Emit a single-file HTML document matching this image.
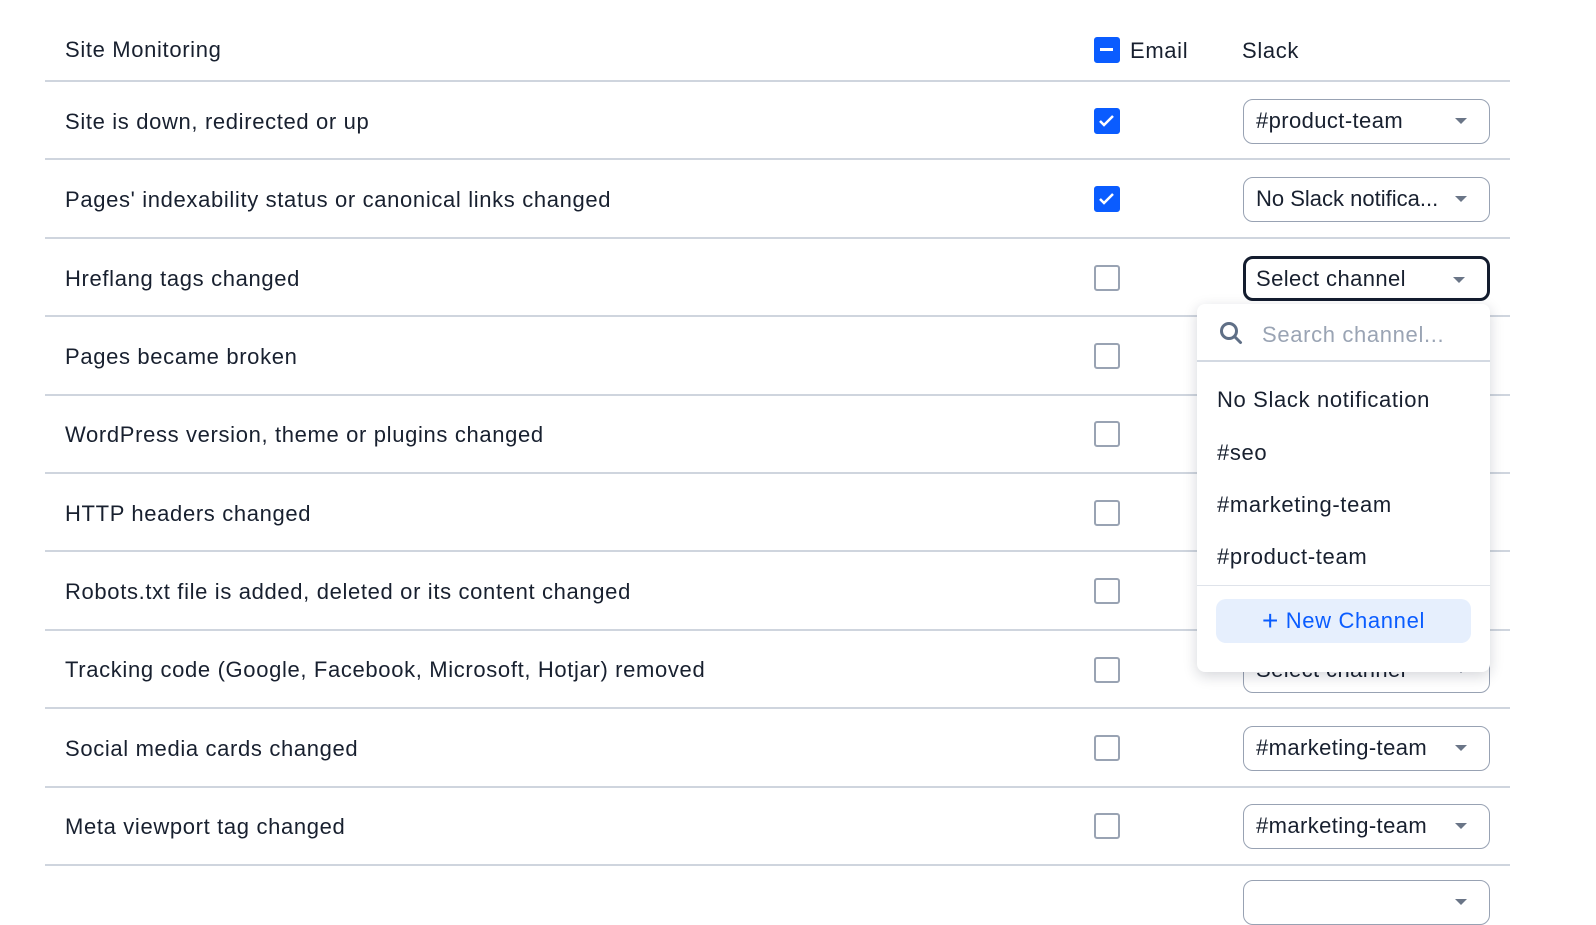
<!DOCTYPE html>
<html><head><style>
*{box-sizing:border-box;margin:0;padding:0}
body{width:1596px;height:900px;background:#fff;font-family:"Liberation Sans",sans-serif;color:#18202f;position:relative;overflow:hidden;letter-spacing:0.65px}
.t{position:absolute;left:65px;font-size:22px;line-height:24px}
.line{position:absolute;left:45px;width:1465px;height:2px;background:#cfd5de}
.cb{position:absolute;left:1094px;width:26px;height:26px;border:2.5px solid #99a3b3;border-radius:3px;background:#fff}
.cb.on{background:#0a5cff;border-color:#0a5cff}
.sel{position:absolute;left:1243px;width:247px;height:45px;border:1.5px solid #98a2b3;border-radius:10px;font-size:22px;padding-left:12px;line-height:42px;background:#fff;white-space:nowrap;letter-spacing:0.4px}
.sel:after{content:"";position:absolute;right:22px;top:18px;border-left:6px solid transparent;border-right:6px solid transparent;border-top:6px solid #6a7587}
.dd{position:absolute;left:1197px;top:304px;width:293px;height:368px;background:#fff;border-radius:8px;box-shadow:0 4px 14px rgba(20,30,50,.18)}
.it{position:absolute;left:20px;font-size:22px}
</style></head><body>
<div class="t" style="top:38px">Site Monitoring</div>
<div class="cb on" style="top:37px"><div style="position:absolute;left:4px;top:9px;width:13px;height:3px;background:#fff"></div></div>
<div style="position:absolute;left:1130px;top:38px;font-size:22px">Email</div>
<div style="position:absolute;left:1242px;top:38px;font-size:22px">Slack</div>
<div class="line" style="top:80px"></div>
<div class="line" style="top:158px"></div>
<div class="line" style="top:237px"></div>
<div class="line" style="top:315px"></div>
<div class="line" style="top:394px"></div>
<div class="line" style="top:472px"></div>
<div class="line" style="top:550px"></div>
<div class="line" style="top:629px"></div>
<div class="line" style="top:707px"></div>
<div class="line" style="top:786px"></div>
<div class="line" style="top:864px"></div>

<div class="t" style="top:110px">Site is down, redirected or up</div>
<div class="t" style="top:188px">Pages' indexability status or canonical links changed</div>
<div class="t" style="top:267px">Hreflang tags changed</div>
<div class="t" style="top:345px">Pages became broken</div>
<div class="t" style="top:423px">WordPress version, theme or plugins changed</div>
<div class="t" style="top:502px">HTTP headers changed</div>
<div class="t" style="top:580px">Robots.txt file is added, deleted or its content changed</div>
<div class="t" style="top:658px">Tracking code (Google, Facebook, Microsoft, Hotjar) removed</div>
<div class="t" style="top:737px">Social media cards changed</div>
<div class="t" style="top:815px">Meta viewport tag changed</div>

<div class="cb on" style="top:108px"><svg width="21" height="21" style="position:absolute;left:0;top:0"><path d="M4 11l4 4 9-9" stroke="#fff" stroke-width="2.5" fill="none"/></svg></div>
<div class="cb on" style="top:186px"><svg width="21" height="21" style="position:absolute;left:0;top:0"><path d="M4 11l4 4 9-9" stroke="#fff" stroke-width="2.5" fill="none"/></svg></div>
<div class="cb" style="top:265px"></div>
<div class="cb" style="top:343px"></div>
<div class="cb" style="top:421px"></div>
<div class="cb" style="top:500px"></div>
<div class="cb" style="top:578px"></div>
<div class="cb" style="top:657px"></div>
<div class="cb" style="top:735px"></div>
<div class="cb" style="top:813px"></div>

<div class="sel" style="top:99px">#product-team</div>
<div class="sel" style="top:177px;letter-spacing:0">No Slack notifica...</div>
<div class="sel" style="top:256px;border:3px solid #131c2e;padding-left:10px;line-height:39px">Select channel</div>
<div class="sel" style="top:648px">Select channel</div>
<div class="sel" style="top:726px">#marketing-team</div>
<div class="sel" style="top:804px">#marketing-team</div>
<div class="sel" style="top:880px"></div>

<div class="dd">
<svg width="26" height="26" style="position:absolute;left:22px;top:17px"><circle cx="10" cy="10" r="7.5" stroke="#5f6f86" stroke-width="3" fill="none"/><path d="M15.5 15.5l6 6" stroke="#5f6f86" stroke-width="3" stroke-linecap="round"/></svg>
<div style="position:absolute;left:65px;top:18px;font-size:22px;color:#9aa4b4">Search channel...</div>
<div style="position:absolute;left:0;top:56px;width:293px;height:2px;background:#d3d9e2"></div>
<div class="it" style="top:83px">No Slack notification</div>
<div class="it" style="top:136px">#seo</div>
<div class="it" style="top:188px">#marketing-team</div>
<div class="it" style="top:240px">#product-team</div>
<div style="position:absolute;left:0;top:281px;width:293px;height:1px;background:#dfe3ea"></div>
<div style="position:absolute;left:19px;top:295px;width:255px;height:44px;background:#e6effd;border-radius:10px;color:#0a5cff;font-size:22px;text-align:center;line-height:44px"><span style="font-size:28px;vertical-align:-2px">+</span> New Channel</div>
</div>
</body></html>
